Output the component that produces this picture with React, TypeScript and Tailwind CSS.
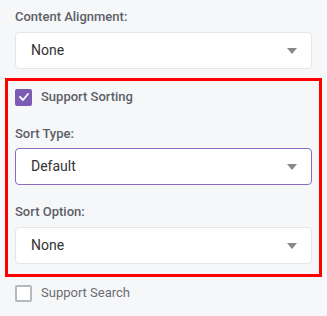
const Caret = () => (
  <svg width="10" height="6" viewBox="0 0 10 6" className="shrink-0">
    <path d="M0 0h10L5 6z" fill="#888" />
  </svg>
)

function Select({ value, active }: { value: string; active?: boolean }) {
  return (
    <div
      className={
        'flex h-[37px] items-center justify-between rounded-[4px] border bg-white pl-[15px] pr-[14px] text-[14px] text-[#333] ' +
        (active ? 'border-[#8a6cc4]' : 'border-[#e4e6ea]')
      }
    >
      <span>{value}</span>
      <Caret />
    </div>
  )
}

function Label({ children }: { children: string }) {
  return <div className="h-4 text-[13px] font-medium leading-4 text-[#5c5f66]">{children}</div>
}

export default function App() {
  return (
    <div
      className="min-h-[316px] w-[327px] bg-[#f6f7f9] px-[15px] pt-[9px]"
      style={{ fontFamily: 'Roboto, "Noto Sans", sans-serif' }}
    >
      <Label>Content Alignment:</Label>
      <div className="mt-[7px]">
        <Select value="None" />
      </div>

      <div className="mx-[-10px] mt-[9px] border-[3px] border-[#ff0000] px-[7px] pb-[10px] pt-[7px]">
        <div className="flex h-[18px] items-center gap-[9px]">
          <span className="flex h-[17px] w-[17px] items-center justify-center rounded-[2px] bg-[#7c5cb3]">
            <svg width="10" height="8" viewBox="0 0 10 8">
              <path d="M1 4l3 3 5-6" fill="none" stroke="#fff" strokeWidth="1.8" strokeLinecap="round" strokeLinejoin="round" />
            </svg>
          </span>
          <span className="text-[13px] font-medium text-[#5c5f66]">Support Sorting</span>
        </div>

        <div className="mt-[20px]">
          <Label>Sort Type:</Label>
        </div>
        <div className="mt-[6px]">
          <Select value="Default" active />
        </div>

        <div className="mt-[19px]">
          <Label>Sort Option:</Label>
        </div>
        <div className="mt-[7px]">
          <Select value="None" />
        </div>
      </div>

      <div className="mt-[7px] flex h-[18px] items-center gap-[9px]">
        <span className="h-[17px] w-[17px] rounded-[2px] border-2 border-[#b4b8bf] bg-white" />
        <span className="text-[13px] text-[#6a6d73]">Support Search</span>
      </div>
    </div>
  )
}
